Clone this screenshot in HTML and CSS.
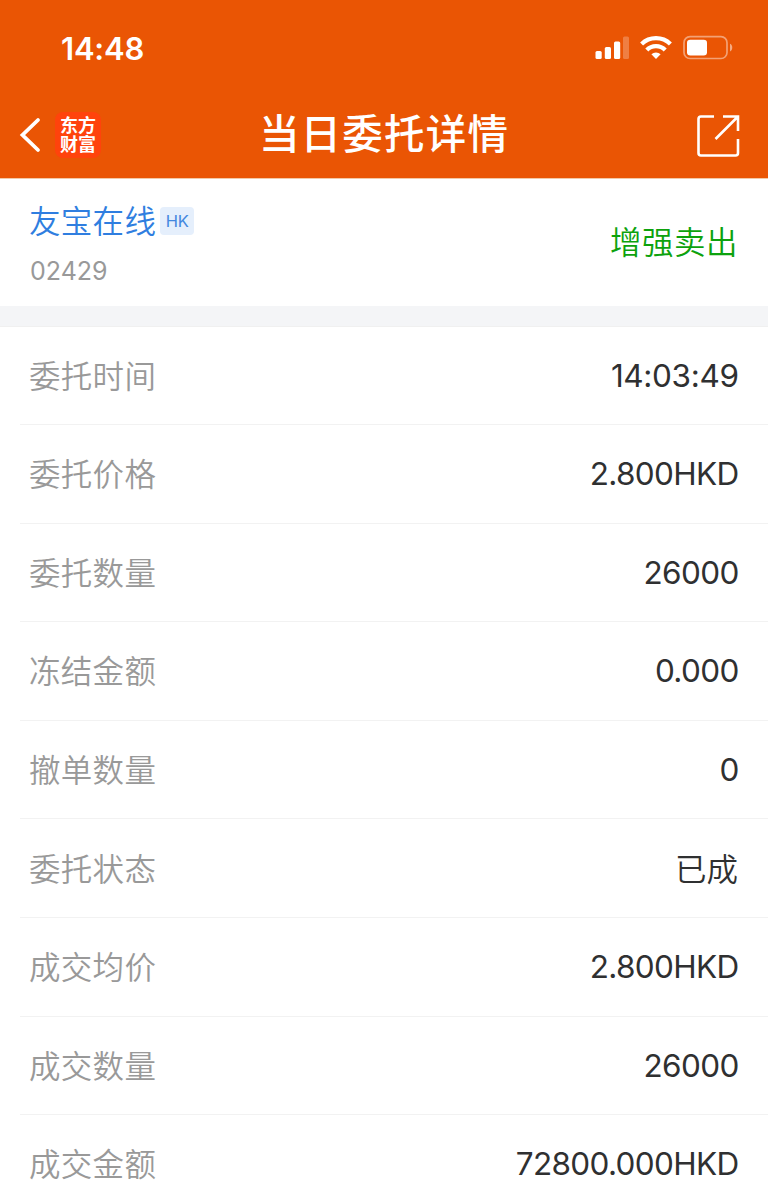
FILE: index.html
```html
<!DOCTYPE html>
<html lang="zh-CN">
<head>
<meta charset="utf-8">
<title>当日委托详情</title>
<link rel="stylesheet" href="styles.css">
</head>
<body>
<header class="header">
  <div class="status">
    <span class="clock">14:48</span>
    <svg class="status-icons" width="138" height="26" viewBox="595 35 138 26" fill="#fff">
      <rect x="595.5" y="51" width="6.2" height="8" rx="1.5"/>
      <rect x="604.8" y="47" width="6.2" height="12" rx="1.5"/>
      <rect x="614" y="41.5" width="6.2" height="17.500" rx="1.5"/>
      <rect x="623" y="36.500" width="6" height="22.500" rx="1.5" opacity=".25"/>
      <g fill="none" stroke="#fff" stroke-width="4.300">
        <path d="M641.600 44A20.800 20.800 0 0 1 670.400 44"/>
        <path d="M646.800 50A12.900 12.900 0 0 1 665.200 50"/>
      </g>
      <path d="M656 59l-4.600-4.700a6.500 6.500 0 0 1 9.200 0z"/>
      <rect x="684" y="36.700" width="43" height="21.800" rx="6" fill="none" stroke="#fff" stroke-width="1.700" opacity=".45"/>
      <rect x="687" y="39.700" width="20" height="15.800" rx="3.300"/>
      <path d="M730 43.700c3 1 3 6.600 0 7.700z" opacity=".5"/>
    </svg>
  </div>
  <div class="navbar">
    <div class="nav-left">
      <svg width="24" height="38" viewBox="18 116 24 38" fill="none" stroke="#fff" stroke-width="3.800" stroke-linecap="round" stroke-linejoin="miter"><path d="M38 120L22.500 135L38 150"/></svg>
      <div class="logo"><span>东方</span><span>财富</span></div>
    </div>
    <h1 class="title">当日委托详情</h1>
    <svg class="share" width="44" height="44" viewBox="696 114 44 44" fill="none" stroke="#fff" stroke-width="2.600"><path d="M714 116.500H701Q698.500 116.500 698.500 119V153Q698.500 155.500 701 155.500H735.500Q738 155.500 738 153V139M723 116.500H738V131M737.500 117L715.500 139"/></svg>
  </div>
</header>
<section class="stock">
  <div>
    <div class="stock-line"><span class="stock-name">友宝在线</span><span class="market">HK</span></div>
    <div class="code">02429</div>
  </div>
  <div class="side">增强卖出</div>
</section>
<main class="details">
  <div class="row"><span class="label">委托时间</span><span class="value time">14:03:49</span></div>
  <div class="row"><span class="label">委托价格</span><span class="value">2.800HKD</span></div>
  <div class="row"><span class="label">委托数量</span><span class="value">26000</span></div>
  <div class="row"><span class="label">冻结金额</span><span class="value">0.000</span></div>
  <div class="row"><span class="label">撤单数量</span><span class="value">0</span></div>
  <div class="row"><span class="label">委托状态</span><span class="value state">已成</span></div>
  <div class="row"><span class="label">成交均价</span><span class="value">2.800HKD</span></div>
  <div class="row"><span class="label">成交数量</span><span class="value">26000</span></div>
  <div class="row"><span class="label">成交金额</span><span class="value">72800.000HKD</span></div>
</main>
</body>
</html>
```
FILE: styles.css
```css
* { box-sizing: border-box; }
body {
  margin: 0;
  height: 1197px;
  overflow: hidden;
  background: #fff;
  color: #2f3031;
  font-family: Inter, "Noto Sans CJK SC", sans-serif;
}
.header { height: 179px; background: #ea5504; color: #fff; border-bottom: 1px solid #f3c9a6; }
.status { display: flex; justify-content: space-between; padding: 35px 35px 0 61px; height: 95px; }
.clock { font-size: 31px; font-weight: 600; line-height: 27px; letter-spacing: -.2px; }
.navbar { display: grid; grid-template-columns: 1fr auto 1fr; align-items: center; height: 82px; padding: 0 28px 0 18px; }
.nav-left { display: flex; align-items: center; gap: 13px; padding-bottom: 2px; }
.logo {
  display: flex; flex-direction: column; align-items: center; justify-content: center;
  width: 46px; height: 46px; border-radius: 8px; background: #ff430c;
  font-size: 18px; line-height: 19px; font-weight: 700;
}
.title { margin: 0; padding: 0 0 2px 10px; font-size: 40.500px; line-height: 60px; font-weight: 500; letter-spacing: 1.200px; }
.share { justify-self: end; }
.stock { display: flex; justify-content: space-between; align-items: center; height: 127px; padding: 0 30px 0 29px; }
.stock-line { display: flex; align-items: center; gap: 4px; height: 46px; }
.stock-name { color: #2f7ee0; font-size: 31.500px; font-weight: 350; line-height: 46px; letter-spacing: .300px; padding-top: 6px; }
.market { width: 34px; height: 28px; margin-top: 3px; border-radius: 4px; background: #e5effc; color: #4488df; font-size: 16.500px; line-height: 29px; letter-spacing: -.3px; text-align: center; }
.code { color: #999; font-size: 25px; line-height: 36px; padding: 3px 0 0 1px; margin-top: 8px; }
.side { color: #0da20d; font-size: 31.500px; font-weight: 350; line-height: 46px; letter-spacing: .5px; }
.details { border-top: 20px solid #f4f5f7; box-shadow: inset 0 1px #f0f0f0; padding-top: .4px; }
.row { display: flex; justify-content: space-between; align-items: center; height: 98.600px; margin-left: 20px; padding: 1px 30px 0 9px; border-bottom: 1px solid #f2f2f2; }
.label { color: #999; font-size: 31.500px; font-weight: 350; line-height: 46px; letter-spacing: .300px; padding-top: 2px; }
.value { font-size: 31.500px; line-height: 46px; letter-spacing: -.650px; margin-right: -.650px; }
.time { letter-spacing: -.350px; }
.state { font-weight: 350; letter-spacing: 0; margin-right: 0; padding-top: 2px; }
```
